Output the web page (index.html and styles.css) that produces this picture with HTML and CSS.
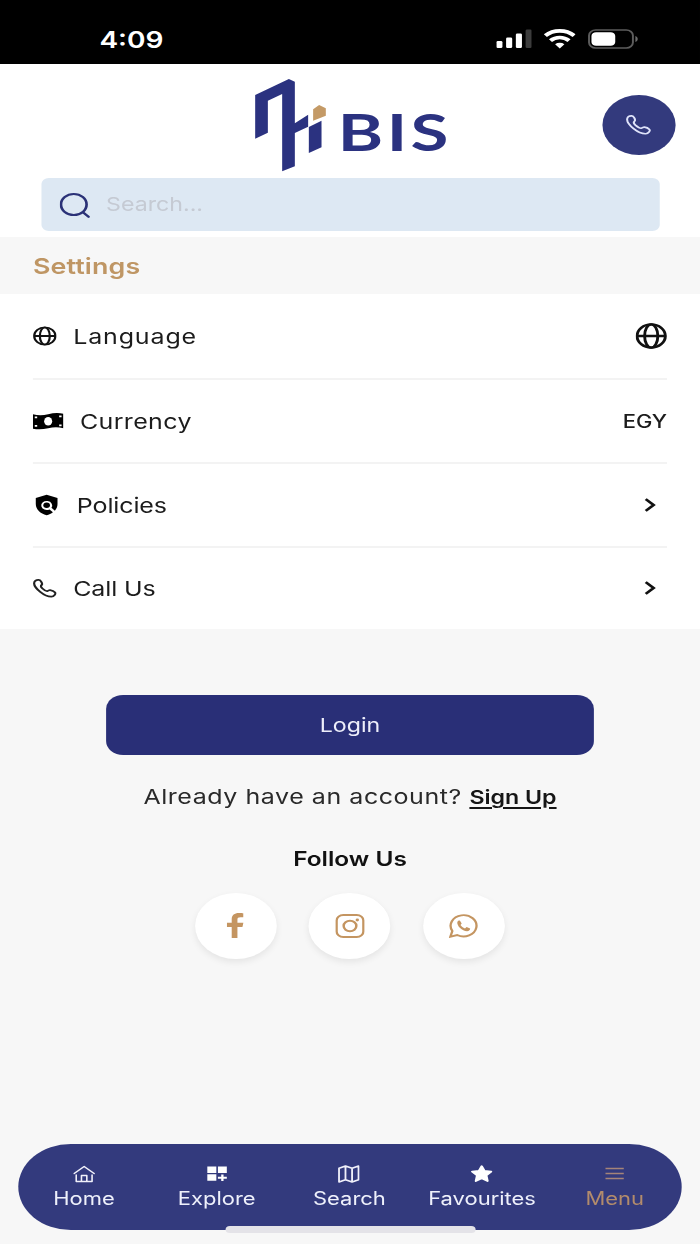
FILE: index.html
```html
<!DOCTYPE html>
<html lang="en">
<head>
    <meta charset="UTF-8">
    <meta name="viewport" content="width=device-width, initial-scale=1.0">
    <title>BIS - Settings</title>
    <link rel="stylesheet" href="styles.css">
</head>
<body>
    <div class="screen">
        <div class="status-bar">
            <span class="time">4:09</span>
            <div class="status-icons">
                <svg width="29" height="20" viewBox="0 0 29 20">
                    <rect x="0" y="12" width="5" height="7" rx="1.2" fill="#fff"/>
                    <rect x="8" y="8.5" width="5" height="10.5" rx="1.2" fill="#fff"/>
                    <rect x="16" y="4.5" width="5" height="14.5" rx="1.2" fill="#fff"/>
                    <rect x="24" y="0.5" width="5" height="18.5" rx="1.2" fill="#3c3c3c"/>
                </svg>
                <svg width="26" height="20" viewBox="0 0 26 20" fill="none" stroke="#fff" stroke-width="3.6">
                    <path d="M1.2 6.600a17 17 0 0 1 23.6 0"/>
                    <path d="M5.4 11.6a11 11 0 0 1 15.2 0"/>
                    <path d="M13 19.500l-3.800-4.300a5.600 5.600 0 0 1 7.600 0z" fill="#fff" stroke="none"/>
                </svg>
                <svg width="42" height="20" viewBox="0 0 42 20">
                    <rect x="1" y="1" width="36" height="18" rx="5.5" fill="none" stroke="#5c5c5c" stroke-width="1.6"/>
                    <rect x="3" y="3.2" width="19.5" height="13.6" rx="3.8" fill="#fff"/>
                    <path d="M39 7v6c2.600-.8 2.600-5.200 0-6z" fill="#6a6a6a"/>
                </svg>
            </div>
        </div>

        <header class="header">
            <div class="header-top">
                <div class="logo">
                    <svg width="59" height="94" viewBox="0 0 72 94" preserveAspectRatio="none">
                        <path fill="#2b3280" d="M.3 17 34 1l6 2.700v41.600l13.300-8.600v12L40 55v33.300l-12.700 5V16L13 22.700v32L.3 60.700z"/>
                        <path fill="#2b3280" d="M54 49l12.700-6.300v26.600L54 75z"/>
                        <path fill="#c49a66" d="M58.300 31.300 64.300 27l6.700 3.300v7.400l-12.700 5z"/>
                    </svg>
                    <span class="logo-text">BIS</span>
                </div>
                <a class="call-btn" href="#">
                    <svg width="21" height="22" viewBox="0 0 24 24"><use href="#phone"/></svg>
                </a>
            </div>
            <div class="search-box">
                <svg width="25" height="26" viewBox="0 0 25 26" fill="none" stroke="#2b3277" stroke-width="2.2" stroke-linecap="round">
                    <circle cx="11.5" cy="12.5" r="10.5"/>
                    <path d="M19 20.200l4.600 4.600"/>
                </svg>
                <span class="placeholder">Search...</span>
            </div>
        </header>

        <h1 class="section-title">Settings</h1>

        <ul class="settings-list">
            <li class="row">
                <svg width="19.500" height="20" viewBox="0 0 24 24"><use href="#globe"/></svg>
                <span class="label language">Language</span>
                <svg width="26" height="26" viewBox="0 0 24 24"><use href="#globe"/></svg>
            </li>
            <li class="row">
                <svg width="25" height="18" viewBox="0 0 25 18">
                    <path d="M0 2.200q6 2 12.500 0T25 1.700v14.500q-6-2-12.500 0T0 16.700z"/>
                    <ellipse cx="12.500" cy="9.200" rx="3.300" ry="4.300" fill="#fff"/>
                    <path fill="#fff" d="M1.500 4.500h2v1.700h-2zM1.500 13h2v1.700h-2zM21.500 3.500h2v1.700h-2zM21.500 12.500h2v1.700h-2z"/>
                </svg>
                <span class="label currency">Currency</span>
                <span class="value">EGY</span>
            </li>
            <li class="row">
                <svg width="22.500" height="24" viewBox="0 0 24 24">
                    <path d="M12 1 2.500 4.600V11c0 5.700 4 10.400 9.500 12 2.100-.7 4-1.800 5.500-3.300l-3-3a4.800 4.800 0 1 1 1.700-1.700l3 3C20.800 16 21.500 13.600 21.500 11V4.600z"/>
                    <circle cx="12" cy="12.300" r="2.900"/>
                </svg>
                <span class="label policies">Policies</span>
                <svg class="chevron" width="10" height="14" viewBox="0 0 10 14"><path d="M1.500 1.200 8 7l-6.500 5.800"/></svg>
            </li>
            <li class="row">
                <svg width="19.500" height="21" viewBox="0 0 24 24"><use href="#phone-plain"/></svg>
                <span class="label call">Call Us</span>
                <svg class="chevron" width="10" height="14" viewBox="0 0 10 14"><path d="M1.500 1.200 8 7l-6.500 5.800"/></svg>
            </li>
        </ul>

        <main class="account">
            <button type="button" class="login-btn">Login</button>
            <p class="signup"><span>Already have an account?</span> <a href="#">Sign Up</a></p>
            <h2 class="follow-title">Follow Us</h2>
            <div class="social">
                <a href="#">
                    <svg width="14" height="26" viewBox="0 0 14 26" fill="#c49561">
                        <path d="M4 25V14H0v-4.300h4V6.300C4 2.200 6.300 0 9.800 0c1.700 0 3 .1 3.700.2v4H11.200c-1.900 0-2.500.9-2.500 2.300v3.200h4.900L12.800 14H8.700v11z"/>
                    </svg>
                </a>
                <a href="#">
                    <svg width="24" height="24" viewBox="0 0 24 24" fill="none" stroke="#c49561" stroke-width="2">
                        <rect x="1" y="1" width="22" height="22" rx="5.5"/>
                        <circle cx="12" cy="12" r="5.2"/>
                        <circle cx="18" cy="6" r="1.400" fill="#c49561" stroke="none"/>
                    </svg>
                </a>
                <a href="#">
                    <svg width="24" height="24" viewBox="0 0 24 24" fill="none" stroke="#c49561" stroke-width="1.9">
                        <path d="M1.300 22.700 2.900 17a10.600 10.600 0 1 1 4 4z"/>
                        <path fill="#c49561" stroke="none" d="M7 8c.3-1.200 1.500-1.900 2.200-1.300l1.400 2.700-1 1.500c.8 1.600 2 2.700 3.700 3.500l1.300-1.300 2.900 1.400c.2 1.300-1 2.500-2.500 2.700C11 17.200 6.500 12 7 8z"/>
                    </svg>
                </a>
            </div>
        </main>

        <nav class="bottom-nav">
            <a href="#">
                <svg width="18" height="18" viewBox="0 0 18 18" fill="none" stroke="#f0f0fa" stroke-width="1.3" stroke-linecap="round" stroke-linejoin="round">
                    <path d="M.8 8.500 9 1.500l8.200 7M2.500 10v6.500h13V10M6.800 16v-5.500h4.400V16"/>
                </svg>
                <span>Home</span>
            </a>
            <a href="#">
                <svg width="18" height="18" viewBox="0 0 18 18" fill="#fff">
                    <path d="M1 1.500h7.400v6.400H1zM9.700 1.500H17v6.400H9.700zM1 9.300h7.400v6.400H1zM12.400 9.500h1.900v2.300H17v1.900h-2.700V16h-1.900v-2.300H9.700v-1.900h2.700z"/>
                </svg>
                <span>Explore</span>
            </a>
            <a href="#">
                <svg width="18" height="18" viewBox="0 0 18 18" fill="none" stroke="#f0f0fa" stroke-width="1.5" stroke-linejoin="round">
                    <path d="M1 3.300 6.300 1l5.400 2.300L17 1v13.700L11.700 17l-5.400-2.300L1 17zM6.300 1v13.700M11.700 3.300V17"/>
                </svg>
                <span>Search</span>
            </a>
            <a href="#">
                <svg width="18" height="18" viewBox="0 0 18 18" fill="#fff" stroke="#fff" stroke-width="1.8" stroke-linejoin="round">
                    <path d="m9 1.200 2.300 4.800 5.500.7-4 3.700 1 5.600L9 13.300l-4.800 2.700 1-5.600-4-3.700 5.500-.7z"/>
                </svg>
                <span>Favourites</span>
            </a>
            <a href="#" class="active">
                <svg width="18" height="18" viewBox="0 0 18 18" fill="none" stroke="#a58479" stroke-width="1.5">
                    <path d="M1.500 3.500h15M1.500 8.500h15M1.500 13.500h15"/>
                </svg>
                <span>Menu</span>
            </a>
            <div class="home-indicator"></div>
        </nav>
    </div>

    <!-- shared icons -->
    <svg class="sprite">
        <symbol id="globe" viewBox="0 0 24 24">
            <g fill="none" stroke="#111" stroke-width="2.2">
                <circle cx="12" cy="12" r="10.700"/>
                <ellipse cx="12" cy="12" rx="5" ry="10.700"/>
                <path d="M1.500 12h21"/>
            </g>
        </symbol>
        <symbol id="phone" viewBox="0 0 24 24">
            <path fill="none" stroke="#dfe3fa" stroke-width="1.900" stroke-linejoin="round" d="M2.500 2.500C4.500 1 6.700 1.200 7.700 3c1.500 2.500 1.700 3.500.6 4.700-1.300 1.300-1.100 2.300.9 4.500 2.200 2.300 3.900 3.700 5.400 3.500 1.100-.2 1.800-1.500 3.100-1.300 1.500.2 3.900 1.700 4.700 2.700 1.100 1.600-1.200 4.700-3.500 4.900C11.700 22.300 1.500 11.500 1.400 5.700c0-1.300.4-2.400 1.100-3.200z"/>
        </symbol>
        <symbol id="phone-plain" viewBox="0 0 24 24">
            <path fill="none" stroke="#222" stroke-width="2.200" stroke-linejoin="round" d="M2.500 2.500C4.500 1 7 1.200 8 3c1.500 2.500 1.900 3.500.8 4.700-1.300 1.300-1.200 2.100.8 4.300 2 2.200 3.500 3.600 4.800 3.300 1-.3 1.700-1.600 3-1.400 1.500.2 4.300 2 5 3 1.100 1.700-1.200 4.900-3.700 5.100C11.700 22.300 1.300 11.500 1.200 5.700c0-1.300.4-2.500 1.300-3.200z"/>
        </symbol>
    </svg>
</body>
</html>
```
FILE: styles.css
```css
* {
    margin: 0;
    padding: 0;
    box-sizing: border-box;
}

body {
    font-family: Inter, 'Liberation Sans', sans-serif;
    background: #f7f7f7;
    width: 700px;
    height: 1244px;
    overflow: hidden;
}

a {
    color: inherit;
    text-decoration: none;
}

svg {
    display: block;
    flex-shrink: 0;
}

/* 574px wide phone screen, stretched to the 700px page */
.screen {
    width: 574px;
    height: 1244px;
    display: flex;
    flex-direction: column;
    transform: scaleX(1.2195);
    transform-origin: 0 0;
}

.sprite {
    display: none;
}

.status-bar {
    height: 64px;
    padding: 14px 50px 0 81.5px;
    background: #000;
    display: flex;
    align-items: center;
    justify-content: space-between;
}

.time {
    color: #fff;
    font-size: 23px;
    font-weight: 600;
    padding-top: 2px;
}

.status-icons {
    display: flex;
    gap: 10px;
}

.header {
    height: 173px;
    padding: 14px 20.5px 0 19.5px;
    background: #fff;
}

.header-top {
    height: 94px;
    display: grid;
    grid-template-columns: 60px 1fr 60px;
    align-items: center;
    margin-bottom: 6px;
}

.logo {
    grid-column: 2;
    padding-right: 2px;
    display: flex;
    justify-content: center;
    gap: 9px;
}

.logo-text {
    color: #2b3280;
    font-family: Lato, sans-serif;
    font-size: 51px;
    font-weight: 700;
    line-height: 62px;
    padding-top: 23px;
    letter-spacing: 2.5px;
    transform: scaleX(1.11);
    transform-origin: 0 0;
}

.call-btn {
    width: 60px;
    height: 60px;
    border-radius: 50%;
    background: #333a7d;
    display: flex;
    align-items: center;
    justify-content: center;
}

.search-box {
    height: 53px;
    margin: 0 13px 0 14px;
    padding: 0 15px;
    border-radius: 6px;
    background: #dde8f3;
    display: flex;
    align-items: center;
    gap: 13.5px;
}

.placeholder {
    color: #c5cad3;
    font-size: 19px;
}

.section-title {
    height: 57px;
    padding-left: 27px;
    color: #bf9664;
    font-size: 22px;
    font-weight: 600;
    letter-spacing: 0.1px;
    line-height: 59px;
}

.settings-list {
    height: 335px;
    padding: 0 27px;
    background: #fff;
    list-style: none;
}

.row {
    height: 84px;
    display: flex;
    align-items: center;
    gap: 13.5px;
    color: #1c1c1c;
    border-bottom: 2px solid #f3f3f3;
}

.row:first-child {
    height: 86px;
}

.row:last-child {
    height: 81px;
    border-bottom: none;
}

.label {
    flex: 1;
    font-size: 20.5px;
    padding-top: 1px;
}

.language {
    letter-spacing: 0.7px;
}

.currency {
    letter-spacing: 0.3px;
}

.policies {
    letter-spacing: -0.1px;
}

.call {
    padding-top: 0;
    letter-spacing: -0.1px;
}

.value {
    font-size: 18px;
    font-weight: 500;
    padding-top: 1px;
}

.chevron {
    margin-right: 9px;
    fill: none;
    stroke: #111;
    stroke-width: 2.4;
}

.row:last-child .chevron {
    margin-bottom: 2px;
}

.account {
    flex: 1;
    padding-top: 66px;
    display: flex;
    flex-direction: column;
    align-items: center;
}

.login-btn {
    width: 400px;
    height: 60px;
    padding-top: 1px;
    border: none;
    border-radius: 14px;
    background: #292f77;
    color: #edeefa;
    font-family: inherit;
    font-size: 19px;
}

.signup {
    margin-top: 28px;
    color: #2a2a2a;
    font-size: 20.5px;
    letter-spacing: 0.45px;
    line-height: 28px;
    white-space: nowrap;
}

.signup a {
    color: #161616;
    font-size: 19px;
    font-weight: 600;
    letter-spacing: 0;
    text-decoration: underline;
    text-decoration-thickness: 1.5px;
    text-underline-offset: 3px;
}

.follow-title {
    margin-top: 32px;
    color: #111;
    font-size: 20px;
    font-weight: 600;
    line-height: 30px;
}

.social {
    margin-top: 19px;
    padding-right: 1px;
    display: flex;
    gap: 26.5px;
}

.social a {
    width: 67px;
    height: 66px;
    border-radius: 50%;
    background: #fff;
    box-shadow: 0 3px 7px rgba(0, 0, 0, 0.08);
    display: flex;
    align-items: center;
    justify-content: center;
}

.bottom-nav {
    position: relative;
    height: 86px;
    margin: 0 15px 14px;
    border-radius: 43px;
    background: #333a7d;
    display: grid;
    grid-template-columns: repeat(5, 1fr);
}

.bottom-nav a {
    padding: 21px 1px 0 0;
    display: flex;
    flex-direction: column;
    align-items: center;
    gap: 5px;
    color: #eef0fb;
    font-size: 18px;
    line-height: 22px;
}

.bottom-nav .active {
    color: #b28b6c;
}

.home-indicator {
    position: absolute;
    left: 169.5px;
    bottom: -3px;
    width: 205px;
    height: 7px;
    border-radius: 4px;
    background: #e4e3e8;
}
```
